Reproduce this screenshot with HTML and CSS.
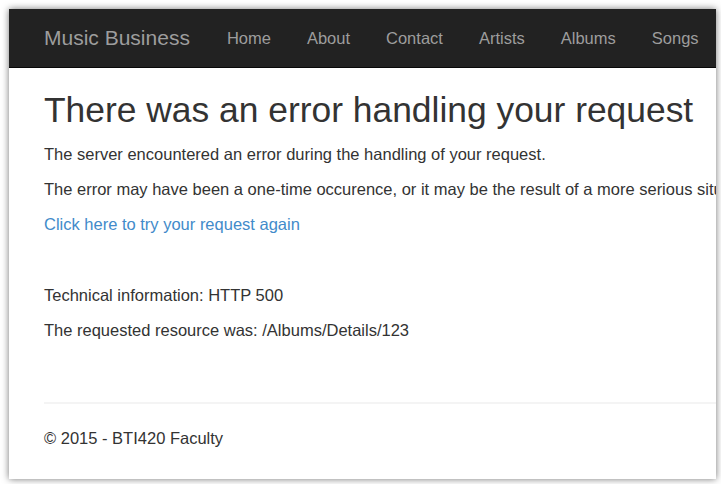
FILE: index.html
```html
<!DOCTYPE html>
<html>
<head>
<meta charset="utf-8">
<link rel="stylesheet" href="styles.css">
</head>
<body>
<div class="window">
  <nav class="navbar">
    <span class="brand">Music Business</span>
    <ul class="nav">
      <li>Home</li>
      <li>About</li>
      <li>Contact</li>
      <li>Artists</li>
      <li>Albums</li>
      <li>Songs</li>
    </ul>
  </nav>
  <main class="content">
    <h1 class="title">There was an error handling your request</h1>
    <p class="text">The server encountered an error during the handling of your request.</p>
    <p class="text">The error may have been a one-time occurence, or it may be the result of a more serious situation.</p>
    <p class="text"><a class="link" href="#">Click here to try your request again</a></p>
    <p class="text tech">Technical information: HTTP 500</p>
    <p class="text">The requested resource was: /Albums/Details/123</p>
    <hr class="rule">
    <footer class="footer">&copy; 2015 - BTI420 Faculty</footer>
  </main>
</div>
</body>
</html>
```
FILE: styles.css
```css
html, body {
  margin: 0;
  padding: 0;
  background: #fff;
}
body {
  padding: 9px 5px 5px 9px;
  font-family: "Liberation Sans", Arial, sans-serif;
  color: #333;
}
.window {
  height: 470px;
  overflow: hidden;
  background: #fff;
  box-shadow: 0 0 7px rgba(0, 0, 0, 0.55);
}
.navbar {
  display: flex;
  align-items: center;
  height: 58px;
  background: #222;
  border-bottom: 1px solid #080808;
  padding-left: 35px;
  white-space: nowrap;
}
.brand {
  font-size: 21px;
  color: #9d9d9d;
  margin-right: 19px;
}
.nav {
  display: flex;
  margin: 0;
  padding: 0;
  list-style: none;
}
.nav li {
  font-size: 16.5px;
  color: #9d9d9d;
  padding: 0 18px;
}
.content {
  padding: 23px 0 0 35px;
  white-space: nowrap;
}
.title {
  font-size: 35.4px;
  font-weight: normal;
  line-height: 38px;
  margin: 0 0 14px;
  color: #333;
}
.text {
  font-size: 16.5px;
  line-height: 23px;
  margin: 0 0 12px;
}
.link {
  color: #428bca;
  text-decoration: none;
}
.tech {
  margin-top: 48px;
}
.rule {
  border: 0;
  border-top: 2px solid #f4f4f4;
  margin: 60px 0 0;
}
.footer {
  font-size: 16.5px;
  line-height: 23px;
  margin-top: 23px;
}
```
